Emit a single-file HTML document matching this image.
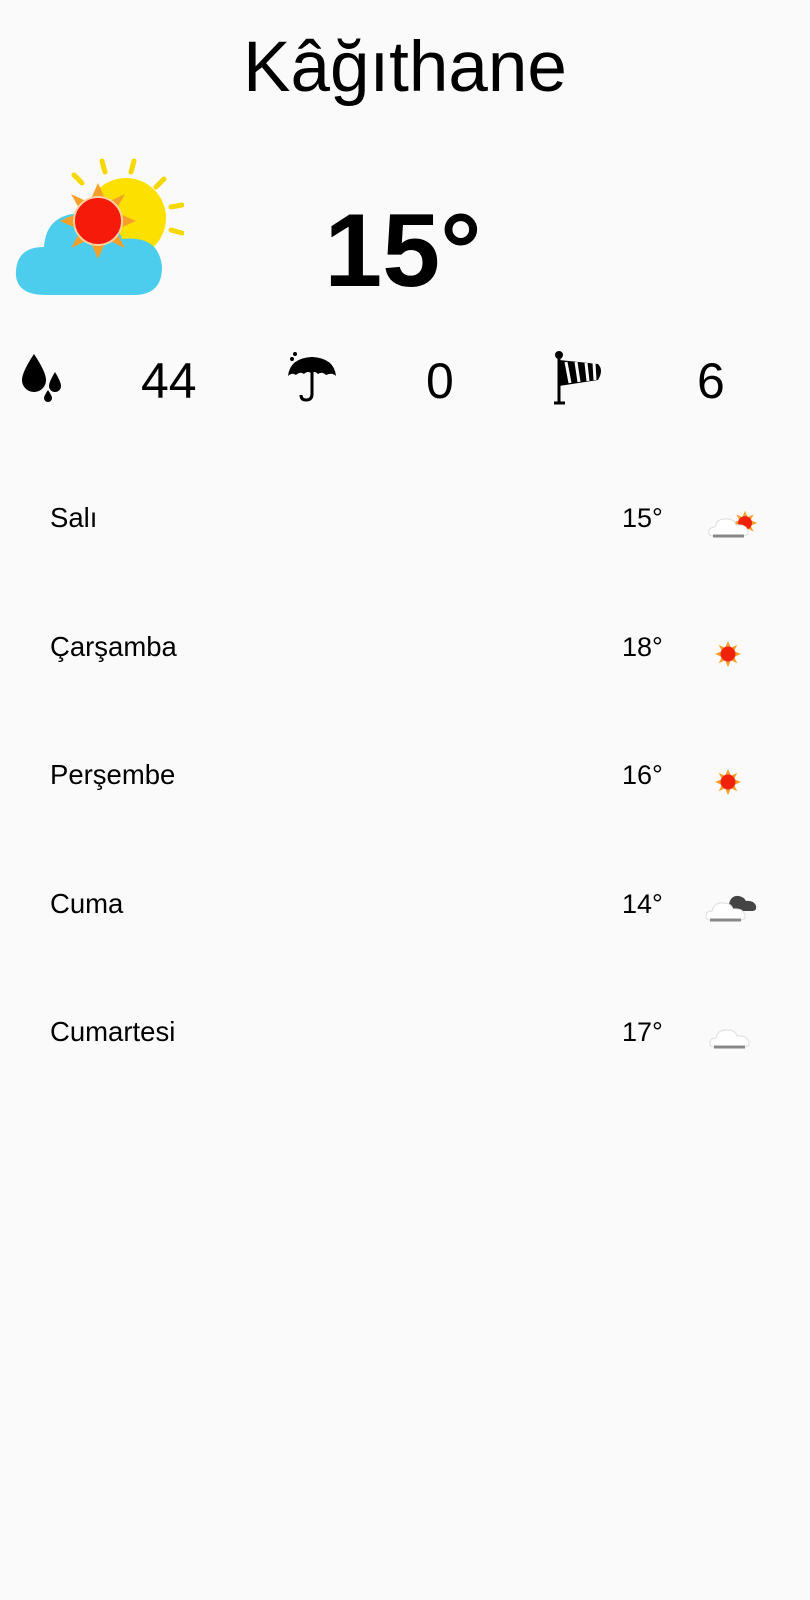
<!DOCTYPE html>
<html><head><meta charset="utf-8"><style>
body{margin:0;width:810px;height:1600px;background:#fafafa;font-family:"Liberation Sans",sans-serif;color:#000;position:relative;overflow:hidden}
.a{position:absolute}
.title{left:0;width:810px;text-align:center;top:26px;font-size:71px;line-height:84px}
.big{left:0;width:810px;text-align:center;top:196px;font-size:104px;font-weight:bold;line-height:110px;text-indent:-4px}
.num{font-size:50px;line-height:50px;top:356px}
.row{left:50px;font-size:27.5px;line-height:30px}
.t{left:622px;font-size:27px;line-height:30px}
</style></head><body>
<div class="a title">Kâğıthane</div>
<div class="a big">15°</div>
<svg class="a" style="left:14px;top:155px" width="170" height="142" viewBox="0 0 170 142">
<g stroke="#f5d800" stroke-width="5" stroke-linecap="round">
<line x1="88" y1="6" x2="91" y2="17"/><line x1="120" y1="6" x2="117" y2="17"/><line x1="150" y1="24" x2="142" y2="32"/><line x1="168" y1="50" x2="157" y2="52"/><line x1="168" y1="78" x2="157" y2="75"/><line x1="60" y1="20" x2="68" y2="28"/></g>
<circle cx="112" cy="63" r="40" fill="#fce100"/>
<path d="M32 140 Q0 140 2 115 Q4 92 30 92 Q32 58 70 58 Q100 58 108 84 Q145 80 148 112 Q148 140 120 140Z" fill="#4ccdee"/>
<g fill="#f6a02a"><polygon points="84,28 92,46 76,46"/><polygon points="84,104 92,86 76,86"/><polygon points="46,66 64,58 64,74"/><polygon points="122,66 104,58 104,74"/><polygon points="57,39 74,47 66,55"/><polygon points="111,39 94,47 102,55"/><polygon points="57,93 74,85 66,77"/><polygon points="111,93 94,85 102,77"/></g>
<circle cx="84" cy="66" r="24" fill="#f51a0a" stroke="#ffd0a0" stroke-width="2"/>
</svg>
<svg class="a" style="left:20px;top:352px" width="44" height="52" viewBox="0 0 44 52">
<path d="M14 2 Q2 20 2 28 A12 12 0 0 0 26 28 Q26 20 14 2Z" fill="#000"/>
<path d="M35 20 Q29 30 29 34 A6 6 0 0 0 41 34 Q41 30 35 20Z" fill="#000"/>
<path d="M28 38 Q24 44 24 46 A4 4 0 0 0 32 46 Q32 44 28 38Z" fill="#000"/>
</svg>
<div class="a num" style="left:141px">44</div>
<svg class="a" style="left:286px;top:352px" width="52" height="52" viewBox="0 0 52 52">
<path d="M2 24 Q4 6 26 5 Q48 6 50 24 Q46 20 40 23 Q36 19 32 22 Q28 18 26 22 Q22 18 18 22 Q14 19 10 23 Q6 20 2 24Z" fill="#000"/>
<path d="M26 5 V42 Q26 48 20 48 Q15 48 15 43" stroke="#000" stroke-width="3" fill="none"/>
<circle cx="6" cy="7" r="2" fill="#000"/><circle cx="9" cy="2" r="2" fill="#000"/>
</svg>
<div class="a num" style="left:426px">0</div>
<svg class="a" style="left:554px;top:350px" width="56" height="56" viewBox="0 0 56 56">
<circle cx="5" cy="5" r="4" fill="#000"/><line x1="5" y1="5" x2="5" y2="52" stroke="#000" stroke-width="3"/><line x1="0" y1="53" x2="11" y2="53" stroke="#000" stroke-width="3"/>
<path d="M5 10 L44 14 Q50 20 44 30 L5 36Z" fill="#000"/>
<g stroke="#fafafa" stroke-width="3"><line x1="12" y1="12" x2="16" y2="33"/><line x1="22" y1="12" x2="25" y2="32"/><line x1="32" y1="13" x2="34" y2="31"/><line x1="40" y1="13" x2="41" y2="30"/></g>
</svg>
<div class="a num" style="left:697px">6</div>

<div class="a row" style="top:503px">Salı</div><div class="a t" style="top:503px">15°</div>
<div class="a row" style="top:632px">Çarşamba</div><div class="a t" style="top:632px">18°</div>
<div class="a row" style="top:760px">Perşembe</div><div class="a t" style="top:760px">16°</div>
<div class="a row" style="top:889px">Cuma</div><div class="a t" style="top:889px">14°</div>
<div class="a row" style="top:1017px">Cumartesi</div><div class="a t" style="top:1017px">17°</div>

<svg width="0" height="0" style="position:absolute"><defs>
<symbol id="sun" viewBox="0 0 30 30"><g fill="#f6a02a"><polygon points="15,1 18,8 12,8"/><polygon points="15,29 18,22 12,22"/><polygon points="1,15 8,12 8,18"/><polygon points="29,15 22,12 22,18"/><polygon points="5,5 11,8 8,11"/><polygon points="25,5 19,8 22,11"/><polygon points="5,25 11,22 8,19"/><polygon points="25,25 19,22 22,19"/></g><circle cx="15" cy="15" r="8" fill="#f0220a"/></symbol>
<symbol id="cl" viewBox="0 0 44 24"><path d="M6 22 Q0 22 1 17 Q2 13 7 13 Q9 4 19 5 Q26 5 28 11 Q38 10 40 17 Q41 22 34 22Z" fill="#fff" stroke="#ddd"/><line x1="5" y1="22" x2="36" y2="22" stroke="#888" stroke-width="3"/></symbol>
</defs></svg>
<svg class="a" style="left:732px;top:510px" width="26" height="26"><use href="#sun" width="26" height="26"/></svg>
<svg class="a" style="left:708px;top:514px" width="44" height="24"><use href="#cl" width="44" height="24"/></svg>
<svg class="a" style="left:714px;top:640px" width="28" height="28"><use href="#sun" width="28" height="28"/></svg>
<svg class="a" style="left:714px;top:768px" width="28" height="28"><use href="#sun" width="28" height="28"/></svg>
<svg class="a" style="left:722px;top:891px" width="36" height="22" viewBox="0 0 36 22"><path d="M4 20 Q0 20 1 16 Q3 12 7 13 Q9 4 17 5 Q22 6 24 10 Q32 9 34 15 Q35 20 30 20Z" fill="#444"/></svg>
<svg class="a" style="left:705px;top:898px" width="44" height="24"><use href="#cl" width="44" height="24"/></svg>
<svg class="a" style="left:709px;top:1025px" width="44" height="24"><use href="#cl" width="44" height="24"/></svg>
</body></html>
